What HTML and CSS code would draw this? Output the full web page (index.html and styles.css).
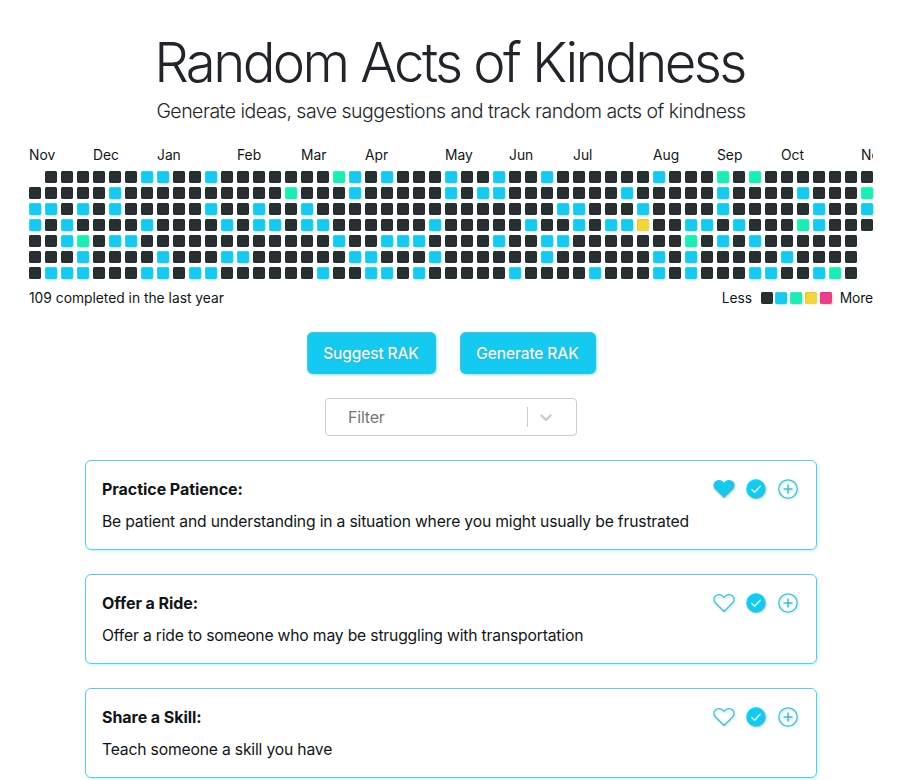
FILE: index.html
```html
<!DOCTYPE html>
<html lang="en">
<head>
<meta charset="utf-8">
<title>Random Acts of Kindness</title>
<link rel="stylesheet" href="styles.css">
</head>
<body>
<svg class="sprite" aria-hidden="true">
  <symbol id="heart" viewBox="0 0 24 24"><path fill="none" stroke="currentColor" stroke-width="1.4" stroke-linejoin="round" d="M12 21.200 2.900 12.300C.4 9.700.5 6.200 2.600 4.300 5.300 1.900 9.500 2.400 12 6 14.500 2.400 18.700 1.900 21.400 4.300 23.500 6.200 23.600 9.700 21.100 12.300Z"/></symbol>
  <symbol id="heart-solid" viewBox="0 0 24 24"><path stroke="currentColor" stroke-width="1.3" stroke-linejoin="round" d="M12 21.200 2.900 12.300C.4 9.700.5 6.200 2.600 4.300 5.300 1.900 9.500 2.400 12 6 14.500 2.400 18.700 1.900 21.400 4.300 23.500 6.200 23.600 9.700 21.100 12.300Z"/></symbol>
  <symbol id="check" viewBox="0 0 20 20"><circle cx="10" cy="10" r="9.4" stroke="currentColor" stroke-width=".8"/><path fill="none" stroke="#d5fbff" stroke-width="1.4" stroke-linecap="round" stroke-linejoin="round" d="m5.800 10.500 2.800 2.800 5.600-6"/></symbol>
  <symbol id="plus" viewBox="0 0 20 20"><g fill="none" stroke="currentColor" stroke-width="1.300"><circle cx="10" cy="10" r="9.200"/><path stroke-width="1.500" d="M10 5.500v9M5.500 10h9"/></g></symbol>
</svg>
<main class="page">
  <header class="hero">
    <h1>Random Acts of Kindness</h1>
    <p>Generate ideas, save suggestions and track random acts of kindness</p>
  </header>
  <section class="calendar">
    <div class="months">
      <span class="m1">Nov</span><span class="m5">Dec</span><span class="m9">Jan</span><span class="m14">Feb</span><span class="m18">Mar</span><span class="m22">Apr</span><span class="m27">May</span><span class="m31">Jun</span><span class="m35">Jul</span><span class="m40">Aug</span><span class="m44">Sep</span><span class="m48">Oct</span><span class="m53">Nov</span>
    </div>
    <div class="weeks" id="weeks"></div>
    <footer class="calendar-footer">
      <span class="total">109 completed in the last year</span>
      <span class="legend"><span class="less">Less</span><i class="day l0"></i><i class="day l1"></i><i class="day l2"></i><i class="day l3"></i><i class="day l4"></i><span class="more">More</span></span>
    </footer>
  </section>
  <div class="actions">
    <button class="btn suggest">Suggest RAK</button>
    <button class="btn generate">Generate RAK</button>
  </div>
  <div class="filter">
    <span class="placeholder">Filter</span>
    <span class="divider"></span>
    <svg class="chevron" viewBox="0 0 20 20"><path d="M4.516 7.548c0.436-0.446 1.043-0.481 1.576 0l3.908 3.747 3.908-3.747c0.533-0.481 1.141-0.446 1.574 0 0.436 0.445 0.408 1.197 0 1.615-0.406 0.418-4.695 4.502-4.695 4.502-0.217 0.223-0.502 0.335-0.787 0.335s-0.570-0.112-0.789-0.335c0 0-4.287-4.084-4.695-4.502s-0.436-1.170 0-1.615z"/></svg>
  </div>
  <section class="cards">
    <article class="card">
      <div class="card-head"><h2>Practice Patience:</h2><div class="icons"><svg class="heart"><use href="#heart-solid"/></svg><svg><use href="#check"/></svg><svg><use href="#plus"/></svg></div></div>
      <p>Be patient and understanding in a situation where you might usually be frustrated</p>
    </article>
    <article class="card">
      <div class="card-head"><h2>Offer a Ride:</h2><div class="icons"><svg class="heart"><use href="#heart"/></svg><svg><use href="#check"/></svg><svg><use href="#plus"/></svg></div></div>
      <p>Offer a ride to someone who may be struggling with transportation</p>
    </article>
    <article class="card">
      <div class="card-head"><h2>Share a Skill:</h2><div class="icons"><svg class="heart"><use href="#heart"/></svg><svg><use href="#check"/></svg><svg><use href="#plus"/></svg></div></div>
      <p>Teach someone a skill you have</p>
    </article>
  </section>
</main>
<script src="calendar.js"></script>
</body>
</html>
```
FILE: styles.css
```css
* { box-sizing: border-box; }
html { overflow: hidden; background: #fff; }
body { margin: 0; height: 780px; overflow: hidden; font: 16px/24px Inter, "Liberation Sans", sans-serif; color: #212529; }
.sprite { display: none; }
.page { width: 844px; margin: 0 0 0 29px; padding-top: 29px; }
.hero { text-align: center; }
h1, h2, p { margin: 0; }
h1 { font-size: 54.5px; line-height: 67px; font-weight: 350; letter-spacing: -2.6px; white-space: nowrap; padding-right: 3px; }
.hero p { font-size: 19.5px; line-height: 30px; font-weight: 350; letter-spacing: -0.52px; white-space: nowrap; }
.calendar { margin-top: 19px; font-size: 13.8px; line-height: 20px; color: #111516; }
.months { display: grid; grid-template-columns: repeat(53, 12px); column-gap: 4px; height: 26px; width: 844px; overflow: hidden; }
.months span { grid-row: 1; white-space: nowrap; width: 0; }
.m1 { grid-column: 1; } .m5 { grid-column: 5; } .m9 { grid-column: 9; } .m14 { grid-column: 14; }
.m18 { grid-column: 18; } .m22 { grid-column: 22; } .m27 { grid-column: 27; } .m31 { grid-column: 31; }
.m35 { grid-column: 35; } .m40 { grid-column: 40; } .m44 { grid-column: 44; } .m48 { grid-column: 48; } .m53 { grid-column: 53; }
.weeks { display: grid; grid-template-columns: repeat(53, 12px); grid-auto-rows: 12px; gap: 4px; }
.day { width: 12px; height: 12px; border-radius: 2px; }
.l0 { background: #272f30; box-shadow: inset 0 0 1px #111; }
.l1 { background: #14caf0; box-shadow: inset 1px 1px 1px #7bb4c2, 1px 1px 2px #7ff3ff; }
.l2 { background: #17efb6; box-shadow: inset 1px 1px 1px #7fceb6, 1px 1px 2px #8dfbe0; }
.l3 { background: #f3d63c; box-shadow: inset 1px 1px 1px #d6c36a, 1px 1px 2px #fff0a0; }
.l4 { background: #ef3e86; box-shadow: inset 1px 1px 1px #b05078, 1px 1px 2px #ffc0da; }
.calendar-footer { display: flex; justify-content: space-between; height: 20px; margin-top: 9px; }
.legend { display: flex; align-items: center; gap: 2.8px; letter-spacing: -0.1px; }
.less { margin-right: 6px; }
.more { margin-left: 5px; }
.actions { display: flex; justify-content: center; gap: 24px; margin-top: 24px; }
.btn { height: 42px; padding: 1px 0 0; border: 0; border-radius: 6px; background: #14caf0; color: #d9fcff; font: 450 15.7px/24px Inter, sans-serif; letter-spacing: -0.23px; text-shadow: 1px 1px 2px #6f9ea8; box-shadow: inset 1px 1px 2px #8ba9b3, 1px 1px 3px #71efff; white-space: nowrap; }
.suggest { width: 129px; }
.generate { width: 136px; }
.filter { display: flex; align-items: center; width: 252px; height: 38px; margin: 24px auto 0; border: 1px solid #ccc; border-radius: 4px; padding: 0 20px 0 22px; color: #757575; }
.placeholder { letter-spacing: -0.2px; }
.divider { width: 1px; height: 20px; background: #ccc; margin-left: auto; }
.chevron { width: 20px; height: 20px; fill: #ccc; margin-left: 8px; }
.cards { width: 732px; margin: 24px auto 0; display: grid; gap: 24px; }
.card { height: 90px; border: 1px solid #62c8dc; border-radius: 6px; padding: 16px; box-shadow: 1px 1px 3px #b4f7ff; color: #111516; }
.card-head { display: flex; justify-content: space-between; height: 24px; }
.card h2 { font-size: 16px; line-height: 24px; font-weight: 700; letter-spacing: -0.05px; }
.card p { margin-top: 9px; white-space: nowrap; font-size: 15.7px; letter-spacing: -0.18px; }
.icons { display: flex; gap: 12px; align-items: center; padding-right: 2px; }
.icons svg { width: 20px; height: 20px; overflow: visible; color: #5cb6cb; fill: #14caf0; filter: drop-shadow(1px 1px 1px #8df2ff); }
.icons .heart { width: 22px; height: 22px; margin-right: -1px; }
```
FILE: calendar.js
```js
// For each weekday, the week columns grouped by activity level; every other day is level 0.
const marks = [
  { 1: [7, 8, 11, 20, 22, 26, 29, 32, 39], 2: [19, 43, 45] },
  { 1: [5, 20, 26, 28, 29, 37, 43, 48], 2: [16, 52] },
  { 1: [0, 1, 3, 5, 11, 14, 17, 33, 34, 38, 43, 49, 52] },
  { 1: [0, 2, 7, 12, 14, 15, 17, 18, 25, 31, 34, 36, 37, 41, 42, 44, 49], 2: [48], 3: [38] },
  { 1: [2, 5, 6, 19, 22, 23, 24, 29, 32, 33, 43, 45], 2: [3, 41] },
  { 1: [3, 8, 12, 13, 20, 21, 25, 32, 39, 41, 47] },
  { 1: [1, 2, 3, 7, 8, 10, 11, 18, 21, 22, 24, 30, 35, 39, 41, 45, 46, 49], 2: [50] }
];
const grid = document.getElementById("weeks");
marks.forEach((row, r) => {
  for (let c = 0; c < 53; c++) {
    const cell = document.createElement("i");
    if (!(r === 0 && c === 0) && !(r > 3 && c === 52)) {
      const level = Object.keys(row).find(k => row[k].includes(c)) || 0;
      cell.className = "day l" + level;
    }
    grid.appendChild(cell);
  }
});
```
